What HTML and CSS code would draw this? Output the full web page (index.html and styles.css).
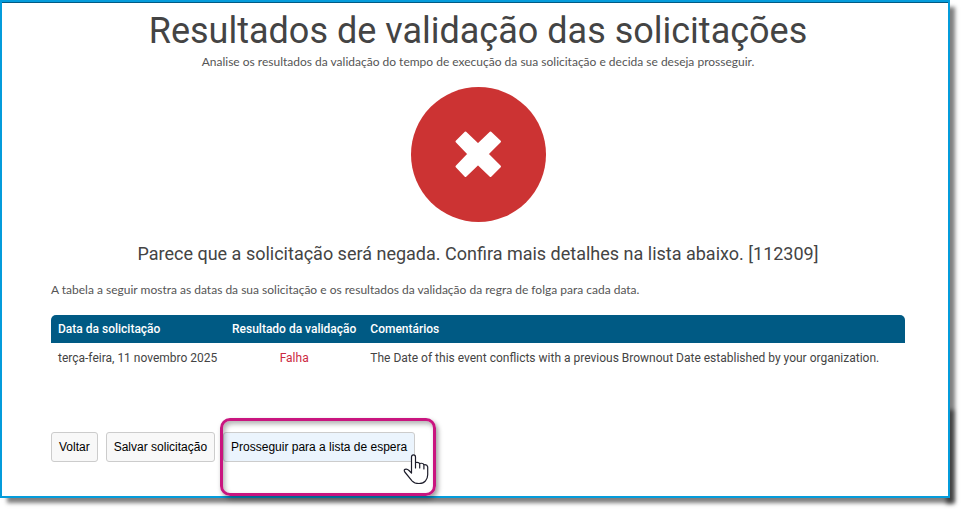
FILE: index.html
```html
<!DOCTYPE html>
<html lang="pt-BR">
<head>
    <meta charset="UTF-8">
    <meta name="viewport" content="width=device-width, initial-scale=1.0">
    <title>Resultados de validação das solicitações</title>
    <link rel="stylesheet" href="styles.css">
</head>
<body>
    <main class="panel">
        <div class="content">
            <header class="intro">
                <h1>Resultados de validação das solicitações</h1>
                <p>Analise os resultados da validação do tempo de execução da sua solicitação e decida se deseja prosseguir.</p>
            </header>

            <svg class="status-icon" viewBox="0 0 135 135" aria-hidden="true">
                <circle cx="67.500" cy="67.500" r="67.500" fill="#cc3333"/>
                <path d="M54.500 45.500 67 57.500 79.500 45.500 89 54.500 76.500 67 89 79.500 79.500 89 67 77 54.500 89 45.500 79.500 57.500 67 45.500 54.500z" fill="#fff" stroke="#fff" stroke-width="2" stroke-linejoin="round"/>
            </svg>

            <h2>Parece que a solicitação será negada. Confira mais detalhes na lista abaixo. [112309]</h2>
            <p class="description">A tabela a seguir mostra as datas da sua solicitação e os resultados da validação da regra de folga para cada data.</p>

            <table class="results">
                <thead>
                    <tr>
                        <th class="col-date">Data da solicitação</th>
                        <th class="col-result">Resultado da validação</th>
                        <th>Comentários</th>
                    </tr>
                </thead>
                <tbody>
                    <tr>
                        <td>terça-feira, 11 novembro 2025</td>
                        <td class="failed">Falha</td>
                        <td>The Date of this event conflicts with a previous Brownout Date established by your organization.</td>
                    </tr>
                </tbody>
            </table>

            <div class="actions">
                <button type="button" class="btn">Voltar</button>
                <button type="button" class="btn">Salvar solicitação</button>
                <div class="highlighted">
                    <button type="button" class="btn btn-hover">Prosseguir para a lista de espera</button>
                    <span class="highlight"></span>
                    <svg class="pointer" viewBox="0 0 26 32" aria-hidden="true">
                        <path d="M8.500 20V4q0-2.200 2-2.200t2 2.200v11V9.500q3.800-.6 4.200 1.500v4-4q3.600-.9 4.200 1v4.500V12q3.300-.6 3.800 1.800v8q0 3.500-2.200 6-2 2.700-6.500 2.700-4.500 0-7-2.700L1.800 19q-1.200-2 .2-2.600 2-.8 4 1.100z" fill="#fff"/>
                        <path d="M8.500 20V4q0-2.200 2-2.200t2 2.200v11M12.500 9.500q3.800-.6 4.200 1.500v4M16.700 10.500q3.600-.9 4.200 1.500v4M20.900 11.800q3.300-.6 3.800 2v8q0 3.500-2.200 6-2 2.700-6.500 2.700-4.500 0-7-2.700L1.800 19q-1.200-2 .2-2.600 2-.8 4 1.100L8.500 20" fill="none" stroke="#1c1c2a" stroke-width="1.200" stroke-linejoin="round" stroke-linecap="round"/>
                    </svg>
                </div>
            </div>
        </div>
    </main>
</body>
</html>
```

FILE: styles.css
```css
* {
    box-sizing: border-box;
    margin: 0;
    padding: 0;
}

body {
    background-color: #fff;
    color: #444;
    font-family: Roboto, Arial, sans-serif;
    font-size: 12px;
    line-height: 16px;
    padding: 0 14px 14px 0;
}

.panel {
    position: relative;
    background-color: #fff;
    border: 2px solid #049cdb;
    box-shadow: 6px 6px 4px -1px rgba(0, 0, 0, 0.5);
}

/* deeper shadow along the lower right edge */
.panel::after {
    content: "";
    position: absolute;
    z-index: -1;
    right: -2px;
    bottom: -2px;
    width: 8px;
    height: 94px;
    box-shadow: 4px 6px 4px rgba(0, 0, 0, 0.5);
}

.content {
    border-top: 1px solid #005a84;
    padding: 6px 43px 34px 49px;
}

.intro {
    text-align: center;
}

h1 {
    font-size: 36px;
    font-weight: 400;
    line-height: 44px;
}

.intro p,
.description {
    color: #555;
    font-family: Lato, "Noto Sans", sans-serif;
    line-height: 18px;
}

.status-icon {
    display: block;
    width: 135px;
    height: 135px;
    margin: 16px auto 20px;
}

h2 {
    font-size: 18px;
    font-weight: 400;
    line-height: 24px;
    text-align: center;
    margin-bottom: 15px;
}

.results {
    width: 100%;
    margin-top: 16px;
    border-collapse: separate;
    border-spacing: 0;
}

.results th {
    background-color: #005a84;
    color: #fff;
    font-weight: 500;
    text-align: left;
    padding: 6px 7px;
}

.results th:first-child {
    border-top-left-radius: 5px;
}

.results th:last-child {
    border-top-right-radius: 5px;
}

.results td {
    padding: 7px;
}

.results .col-date {
    width: 174px;
}

.results .col-result {
    width: 138px;
    white-space: nowrap;
}

.results .failed {
    color: #cc2a41;
    text-align: center;
}

.actions {
    display: flex;
    flex-wrap: wrap;
    gap: 8px;
    margin-top: 59px;
}

.btn {
    height: 30px;
    padding: 0 7px;
    background-color: #f8f8f8;
    border: 1px solid #ccc;
    border-radius: 3px;
    color: #000;
    font-family: "Liberation Sans", Arial, sans-serif;
    font-size: 12px;
    cursor: pointer;
}

.btn:hover,
.btn-hover {
    background-color: #ebf4fd;
}

.highlighted {
    position: relative;
}

.highlight {
    position: absolute;
    top: -14px;
    right: -21px;
    bottom: -34px;
    left: -3px;
    border: 3px solid #c9157f;
    border-radius: 10px;
    box-shadow: 2px 3px 5px rgba(0, 0, 0, 0.4), inset 2px 3px 5px rgba(0, 0, 0, 0.3);
    pointer-events: none;
}

.pointer {
    position: absolute;
    right: -14px;
    bottom: -23px;
    width: 26px;
    height: 32px;
    pointer-events: none;
}
```
